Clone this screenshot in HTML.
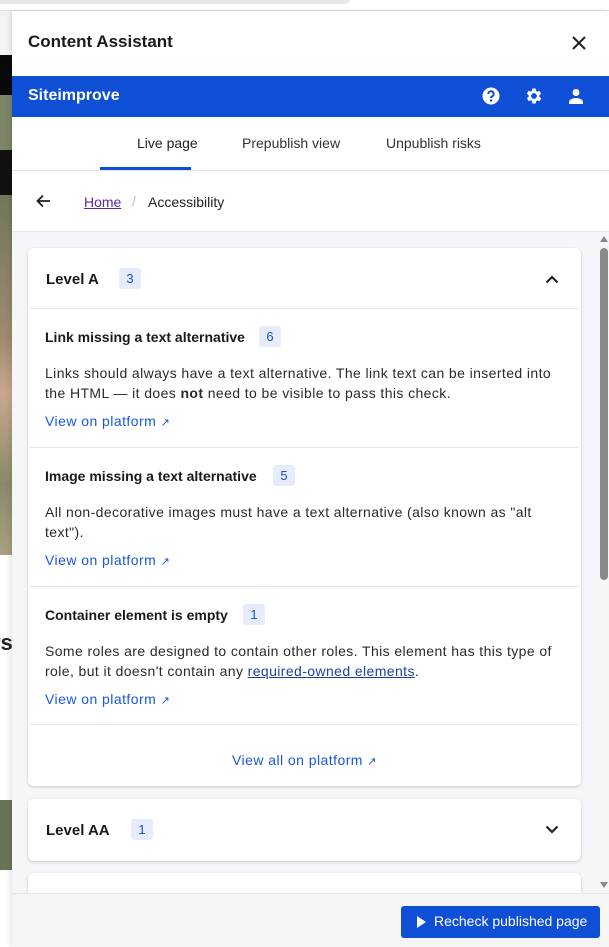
<!DOCTYPE html>
<html><head><style>
*{box-sizing:border-box;margin:0;padding:0}
body{width:609px;height:947px;position:relative;overflow:hidden;font-family:"Liberation Sans",sans-serif;color:#222;background:#fff}
.a{position:absolute}
.badge{display:inline-block;background:#e6ecfb;color:#1a4fd6;border-radius:3px;font-size:13px;text-align:center;line-height:21px;height:21px;font-weight:normal}
.lnk{color:#1a56db;font-size:14px;letter-spacing:.45px}
.t{font-size:14px;line-height:20px;color:#2a2a2a;white-space:nowrap;letter-spacing:.4px}
.h{font-size:14px;font-weight:bold;color:#1a1a1a}
</style></head><body>
<div class="a" style="left:0;top:0;width:609px;height:10px;background:#fff"></div>
<div class="a" style="left:0;top:0;width:350px;height:4px;background:#e8e8e8;border-radius:0 0 8px 0"></div>
<div class="a" style="left:0;top:10px;width:609px;height:1px;background:#e0e0e0"></div>
<div class="a" style="left:0;top:11px;width:12px;height:44px;background:#f3f3f3"></div>
<div class="a" style="left:0;top:55px;width:12px;height:40px;background:#0a0a0a"></div>
<div class="a" style="left:0;top:95px;width:12px;height:55px;background:#7c8566"></div>
<div class="a" style="left:0;top:150px;width:12px;height:45px;background:#111"></div>
<div class="a" style="left:0;top:195px;width:12px;height:360px;background:linear-gradient(#6f7858,#a08a70 40%,#c9a88a 55%,#8a8a6a 80%,#a8a080)"></div>
<div class="a" style="left:0;top:555px;width:12px;height:245px;background:#fff"></div>
<div class="a" style="top:630px;font-size:22px;font-weight:bold;left:-8px">rs</div>
<div class="a" style="left:0;top:800px;width:12px;height:70px;background:#6a7458"></div>

<div class="a" style="left:12px;top:11px;width:597px;height:936px;background:#fff;box-shadow:-2px 0 4px rgba(0,0,0,.1)"></div>
<div class="a" style="left:28px;top:32px;font-size:17px;font-weight:bold;color:#1a1a1a">Content Assistant</div>
<svg class="a" style="left:572px;top:36px" width="14" height="14" viewBox="0 0 14 14"><path d="M1 1L13 13M13 1L1 13" stroke="#222" stroke-width="2"/></svg>
<div class="a" style="left:12px;top:76px;width:597px;height:41px;background:#0f4fd6"></div>
<div class="a" style="left:28px;top:87px;font-size:16px;font-weight:bold;color:#fff">Siteimprove</div>
<svg class="a" style="left:482px;top:87px" width="18" height="18" viewBox="0 0 18 18"><circle cx="9" cy="9" r="8.5" fill="#fff"/><path d="M6.3 7a2.7 2.7 0 1 1 3.8 2.4c-.8.4-1.1.8-1.1 1.6" stroke="#0f4fd6" stroke-width="2" fill="none"/><circle cx="9" cy="13.5" r="1.2" fill="#0f4fd6"/></svg>
<svg class="a" style="left:524px;top:86px" width="20" height="20" viewBox="0 0 24 24"><path fill="#fff" d="M19.4 13a7.5 7.5 0 0 0 0-2l2.1-1.6-2-3.5-2.5 1a7 7 0 0 0-1.7-1L15 3h-4l-.4 2.7a7 7 0 0 0-1.7 1l-2.5-1-2 3.5L6.6 11a7.5 7.5 0 0 0 0 2l-2.1 1.6 2 3.5 2.5-1a7 7 0 0 0 1.7 1L11 21h4l.4-2.7a7 7 0 0 0 1.7-1l2.5 1 2-3.5zM13 15.5a3.5 3.5 0 1 1 0-7 3.5 3.5 0 0 1 0 7z" transform="translate(-1 0)"/></svg>
<svg class="a" style="left:568px;top:88px" width="16" height="16" viewBox="0 0 16 16"><circle cx="8" cy="4.5" r="3.5" fill="#fff"/><path d="M1 16v-2c0-2.5 4-4 7-4s7 1.5 7 4v2z" fill="#fff"/></svg>

<div class="a" style="left:137px;top:135px;font-size:14px;color:#222">Live page</div>
<div class="a" style="left:242px;top:135px;font-size:14px;color:#333">Prepublish view</div>
<div class="a" style="left:386px;top:135px;font-size:14px;color:#333">Unpublish risks</div>
<div class="a" style="left:100px;top:167px;width:91px;height:3px;background:#0f4fd6"></div>
<div class="a" style="left:12px;top:170px;width:597px;height:1px;background:#e4e4e4"></div>

<svg class="a" style="left:36px;top:194px" width="15" height="14" viewBox="0 0 15 14"><path d="M14 7H2M7 1.5L1.5 7 7 12.5" stroke="#222" stroke-width="1.8" fill="none"/></svg>
<div class="a" style="left:84px;top:194px;font-size:14px;color:#5b2a9e;text-decoration:underline">Home</div>
<div class="a" style="left:132px;top:193px;font-size:14px;color:#bbb">/</div>
<div class="a" style="left:148px;top:194px;font-size:14px;color:#222">Accessibility</div>

<div class="a" style="left:12px;top:231px;width:597px;height:664px;background:#f5f6fa;border-top:1px solid #e8e8ee"></div>
<div class="a" style="left:600px;top:236px;width:0;height:0;border-left:4px solid transparent;border-right:4px solid transparent;border-bottom:6px solid #888"></div>
<div class="a" style="left:600px;top:248px;width:8px;height:332px;background:#8a8a8a;border-radius:4px"></div>
<div class="a" style="left:600px;top:882px;width:0;height:0;border-left:4px solid transparent;border-right:4px solid transparent;border-top:6px solid #888"></div>

<div class="a" style="left:28px;top:248px;width:553px;height:538px;background:#fff;border-radius:6px;box-shadow:0 1px 3px rgba(0,0,0,.18)"></div>
<div class="a" style="left:46px;top:271px;font-size:15px;font-weight:bold;color:#1a1a1a">Level A</div>
<div class="a badge" style="left:119px;top:268px;width:22px">3</div>
<svg class="a" style="left:545px;top:274px" width="14" height="10" viewBox="0 0 14 10"><path d="M1.5 8.5L7 3l5.5 5.5" stroke="#222" stroke-width="2.2" fill="none"/></svg>
<div class="a" style="left:30px;top:308px;width:549px;height:1px;background:#e6e6e6"></div>

<div class="a h" style="left:45px;top:329px">Link missing a text alternative</div>
<div class="a badge" style="left:259px;top:326px;width:22px">6</div>
<div class="a t" style="left:45px;top:363px">Links should always have a text alternative. The link text can be inserted into<br>the HTML — it does <b>not</b> need to be visible to pass this check.</div>
<div class="a lnk" style="left:45px;top:413px">View on platform <span style="font-size:11px">↗</span></div>
<div class="a" style="left:30px;top:447px;width:549px;height:1px;background:#e6e6e6"></div>

<div class="a h" style="left:45px;top:468px">Image missing a text alternative</div>
<div class="a badge" style="left:273px;top:465px;width:22px">5</div>
<div class="a t" style="left:45px;top:502px">All non-decorative images must have a text alternative (also known as "alt<br>text").</div>
<div class="a lnk" style="left:45px;top:552px">View on platform <span style="font-size:11px">↗</span></div>
<div class="a" style="left:30px;top:586px;width:549px;height:1px;background:#e6e6e6"></div>

<div class="a h" style="left:45px;top:607px">Container element is empty</div>
<div class="a badge" style="left:243px;top:604px;width:22px">1</div>
<div class="a t" style="left:45px;top:641px">Some roles are designed to contain other roles. This element has this type of<br>role, but it doesn't contain any <span style="color:#1a3fa8;text-decoration:underline">required-owned elements</span>.</div>
<div class="a lnk" style="left:45px;top:691px">View on platform <span style="font-size:11px">↗</span></div>
<div class="a" style="left:30px;top:724px;width:549px;height:1px;background:#e6e6e6"></div>
<div class="a lnk" style="left:232px;top:752px">View all on platform <span style="font-size:11px">↗</span></div>

<div class="a" style="left:28px;top:799px;width:553px;height:62px;background:#fff;border-radius:6px;box-shadow:0 1px 3px rgba(0,0,0,.18)"></div>
<div class="a" style="left:46px;top:822px;font-size:15px;font-weight:bold;color:#1a1a1a">Level AA</div>
<div class="a badge" style="left:131px;top:819px;width:22px">1</div>
<svg class="a" style="left:545px;top:825px" width="14" height="10" viewBox="0 0 14 10"><path d="M1.5 1.5L7 7l5.5-5.5" stroke="#222" stroke-width="2.2" fill="none"/></svg>
<div class="a" style="left:28px;top:873px;width:553px;height:30px;background:#fff;border-radius:6px;box-shadow:0 1px 3px rgba(0,0,0,.18)"></div>

<div class="a" style="left:12px;top:893px;width:597px;height:54px;background:#f5f5f5;border-top:1px solid #e6e6e6"></div>
<div class="a" style="left:401px;top:906px;width:199px;height:32px;background:#0f4fd6;border-radius:3px"></div>
<div class="a" style="left:417px;top:916px;width:0;height:0;border-top:6px solid transparent;border-bottom:6px solid transparent;border-left:9px solid #fff"></div>
<div class="a" style="left:434px;top:913px;font-size:14px;color:#fff">Recheck published page</div>
</body></html>
